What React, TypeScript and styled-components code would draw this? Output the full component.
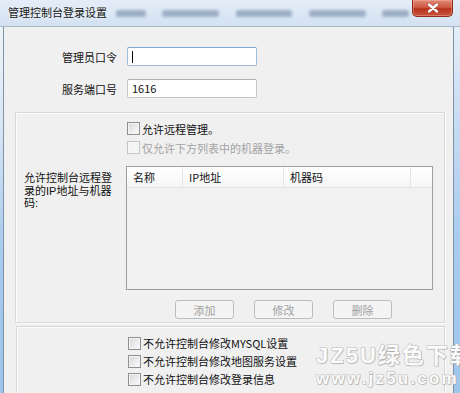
import React from "react";
import styled, { createGlobalStyle } from "styled-components";

const GlobalStyle = createGlobalStyle`
  html, body { margin: 0; padding: 0; background: #f0f0f0; }
  body { font-family: "Noto Sans CJK SC", "Noto Sans", sans-serif; }
  * { box-sizing: border-box; }
`;

const Window = styled.div`
  position: relative;
  width: 460px;
  height: 393px;
  overflow: hidden;
  display: flex;
  flex-direction: column;
  background: #f0f0f0;
`;

const TitleBar = styled.div`
  flex: none;
  height: 27px;
  display: flex;
  align-items: flex-start;
  background: linear-gradient(#e4edf8, #d3e1f1);
  border-bottom: 1px solid #a7b6c8;
`;

const Title = styled.div`
  margin: 5px 0 0 8px;
  font-size: 11px;
  line-height: 15px;
  color: #151515;
  text-shadow: 0 0 4px rgba(255, 255, 255, 0.9);
  white-space: nowrap;
`;

const Ghost = styled.span<{ $w: number; $ml: number }>`
  display: block;
  width: ${(p) => p.$w}px;
  margin-left: ${(p) => p.$ml}px;
  margin-top: 10px;
  height: 7px;
  border-radius: 3px;
  background: rgba(70, 95, 130, 0.42);
  filter: blur(1.6px);
`;

const CloseButton = styled.div`
  margin-left: auto;
  margin-right: 7px;
  width: 41px;
  height: 17px;
  border: 1px solid #8e2d1e;
  border-top: none;
  border-radius: 0 0 5px 5px;
  background: linear-gradient(#e08a78, #cf5a44 45%, #b8321d 55%, #c9553c);
  display: flex;
  align-items: center;
  justify-content: center;
  box-shadow: inset 0 0 0 1px rgba(255, 200, 190, 0.35);
`;

const BodyRow = styled.div`
  flex: 1;
  min-height: 0;
  display: flex;
`;

const LeftFrame = styled.div`
  width: 4px;
  flex: none;
  background: linear-gradient(#eef3f9, #dbe7f4 25%, #a8cbee 60%, #9cc3ea);
  border-right: 1px solid #7f93a8;
`;

const RightFrame = styled.div`
  width: 7px;
  flex: none;
  background: linear-gradient(#e6eef8, #c8dcf2 25%, #a8cbee 60%, #9fc6ec);
  border-left: 1px solid #7f93a8;
`;

const Content = styled.div`
  flex: 1;
  min-width: 0;
  display: flex;
  flex-direction: column;
  padding-top: 20px;
  background: #f0f0f0;
  color: #111;
  font-size: 11px;
`;

const FieldGrid = styled.div`
  display: grid;
  grid-template-columns: 113px 130px;
  column-gap: 10px;
  row-gap: 13px;
`;

const FieldLabel = styled.div`
  text-align: right;
  align-self: center;
  font-size: 11px;
  line-height: 14px;
  color: #111;
`;

const TextBox = styled.div<{ $focused?: boolean }>`
  position: relative;
  height: 19px;
  background: #fff;
  border: 1px solid ${(p) => (p.$focused ? "#9dbcdc" : "#c3c7cc")};
  border-top-color: ${(p) => (p.$focused ? "#7fa6cf" : "#adb1b6")};
  border-radius: 2px;
  padding-left: 4px;
  font-size: 11px;
  line-height: 17px;
  color: #111;
  display: flex;
  align-items: center;
`;

const Caret = styled.span`
  display: block;
  width: 1px;
  height: 12px;
  background: #000;
`;

const Panel = styled.div`
  border: 1px solid #d6d9dc;
  box-shadow: inset 1px 1px 0 #fbfbfb, 1px 1px 0 #fbfbfb;
`;

const RemotePanel = styled(Panel)`
  margin: 14px 8px 0 11px;
  padding: 8px 0 3px 8px;
  display: grid;
  grid-template-columns: 102px 307px;
`;

const LockPanel = styled(Panel)`
  flex: 1;
  margin: 3px 8px -4px 12px;
  padding: 7px 0 0 110px;
  display: flex;
  flex-direction: column;
`;

const CheckRow = styled.label<{ $disabled?: boolean; $mt?: number; $h?: number }>`
  grid-column: 2;
  display: flex;
  align-items: center;
  gap: 2px;
  height: ${(p) => p.$h ?? 15}px;
  margin-top: ${(p) => p.$mt ?? 0}px;
  padding-left: 1px;
  font-size: 11px;
  line-height: 14px;
  color: ${(p) => (p.$disabled ? "#a3a3a3" : "#111")};
  white-space: nowrap;
`;

const Box = styled.span<{ $disabled?: boolean }>`
  display: block;
  flex: none;
  width: 13px;
  height: 13px;
  border: 1px solid ${(p) => (p.$disabled ? "#c4c4c4" : "#8e8f8f")};
  background: ${(p) =>
    p.$disabled
      ? "#f4f4f4"
      : "linear-gradient(135deg, #d6d6d6, #f2f2f2 70%, #fbfbfb)"};
  box-shadow: inset 0 0 0 1px ${(p) => (p.$disabled ? "#f7f7f7" : "#f4f4f4")};
`;

const ListLabel = styled.div`
  grid-column: 1;
  margin-top: 11px;
  padding-top: 6px;
  display: flex;
  flex-direction: column;
  font-family: "Liberation Sans", "Noto Sans CJK SC", sans-serif;
  font-size: 11px;
  line-height: 12.5px;
  color: #111;
`;

const LabelLine = styled.span`
  display: block;
  white-space: nowrap;
`;

const ListView = styled.div`
  grid-column: 2;
  margin-top: 11px;
  height: 124px;
  border: 1px solid #9a9fa6;
  background: #f1f1f1;
`;

const ListHeader = styled.div`
  display: grid;
  grid-template-columns: 56px 101px 127px 1fr;
  height: 21px;
  background: linear-gradient(#ffffff, #fbfbfb 50%, #f4f5f6);
  border-bottom: 1px solid #dfe2e6;
`;

const HeaderCell = styled.div`
  display: flex;
  align-items: center;
  padding-left: 6px;
  border-right: 1px solid #e3e5e8;
  font-size: 11px;
  color: #111;
  &:last-child { border-right: none; }
`;

const ButtonRow = styled.div`
  grid-column: 2;
  margin-top: 10px;
  padding-left: 49px;
  display: flex;
  gap: 20px;
`;

const Button = styled.div`
  width: 59px;
  height: 19px;
  border: 1px solid #b9bdc1;
  border-radius: 3px;
  background: #f4f4f4;
  display: flex;
  align-items: center;
  justify-content: center;
  font-size: 11px;
  color: #a0a0a0;
`;

const Watermark = styled.div`
  position: absolute;
  left: 316px;
  top: 343px;
  font-family: "Liberation Sans", "Noto Sans CJK SC", sans-serif;
  font-weight: bold;
  color: #fbfbfb;
  -webkit-text-stroke: 1.2px #bdbdbd;
  paint-order: stroke fill;
  text-shadow: 1px 1px 1px rgba(0, 0, 0, 0.12);
  white-space: nowrap;
  pointer-events: none;
`;

const WatermarkBig = styled.div`
  font-size: 22px;
  line-height: 26px;
  letter-spacing: 2px;
`;

const WatermarkSmall = styled.div`
  font-size: 17px;
  line-height: 19px;
  letter-spacing: 2.2px;
`;

const CloseIcon = () => (
  <svg width="12" height="10" viewBox="0 0 12 10">
    <path
      d="M2 1.5 L10 8.5 M10 1.5 L2 8.5"
      stroke="#5a1a10"
      strokeWidth="3.6"
      strokeLinecap="round"
      opacity="0.35"
    />
    <path
      d="M2 1.5 L10 8.5 M10 1.5 L2 8.5"
      stroke="#ffffff"
      strokeWidth="2.4"
      strokeLinecap="round"
    />
  </svg>
);

const Check = ({
  text,
  disabled,
  mt,
  h,
}: {
  text: string;
  disabled?: boolean;
  mt?: number;
  h?: number;
}) => (
  <CheckRow $disabled={disabled} $mt={mt} $h={h}>
    <Box $disabled={disabled} />
    <span>{text}</span>
  </CheckRow>
);

export default function App() {
  return (
    <>
      <GlobalStyle />
      <Window>
        <TitleBar>
          <Title>管理控制台登录设置</Title>
          <Ghost $w={30} $ml={9} />
          <Ghost $w={57} $ml={16} />
          <Ghost $w={56} $ml={17} />
          <Ghost $w={57} $ml={17} />
          <Ghost $w={27} $ml={16} />
          <CloseButton>
            <CloseIcon />
          </CloseButton>
        </TitleBar>
        <BodyRow>
          <LeftFrame />
          <Content>
            <FieldGrid>
              <FieldLabel>管理员口令</FieldLabel>
              <TextBox $focused>
                <Caret />
              </TextBox>
              <FieldLabel>服务端口号</FieldLabel>
              <TextBox>1616</TextBox>
            </FieldGrid>

            <RemotePanel>
              <Check text="允许远程管理。" />
              <Check text="仅允许下方列表中的机器登录。" disabled mt={4} />
              <ListLabel>
                <LabelLine>允许控制台远程登</LabelLine>
                <LabelLine>录的IP地址与机器</LabelLine>
                <LabelLine>码:</LabelLine>
              </ListLabel>
              <ListView>
                <ListHeader>
                  <HeaderCell>名称</HeaderCell>
                  <HeaderCell>IP地址</HeaderCell>
                  <HeaderCell>机器码</HeaderCell>
                  <HeaderCell />
                </ListHeader>
              </ListView>
              <ButtonRow>
                <Button>添加</Button>
                <Button>修改</Button>
                <Button>删除</Button>
              </ButtonRow>
            </RemotePanel>

            <LockPanel>
              <Check text="不允许控制台修改MYSQL设置" h={18} />
              <Check text="不允许控制台修改地图服务设置" h={18} />
              <Check text="不允许控制台修改登录信息" h={18} />
            </LockPanel>
          </Content>
          <RightFrame />
        </BodyRow>
        <Watermark>
          <WatermarkBig>JZ5U绿色下载</WatermarkBig>
          <WatermarkSmall>www.jz5u.com</WatermarkSmall>
        </Watermark>
      </Window>
    </>
  );
}
